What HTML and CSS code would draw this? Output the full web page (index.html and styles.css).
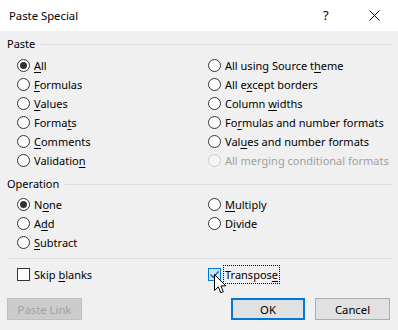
FILE: index.html
```html
<!DOCTYPE html>
<html lang="en">
<head>
    <meta charset="UTF-8">
    <meta name="viewport" content="width=device-width, initial-scale=1.0">
    <title>Paste Special</title>
    <link rel="stylesheet" href="styles.css">
</head>
<body>

<div class="dialog">
    <div class="titlebar">
        <span class="title">Paste Special</span>
        <span class="help">?</span>
        <span class="close">
            <svg width="11" height="11" viewBox="0 0 11 11"><path d="M0.5 0.5 L10.5 10.5 M10.5 0.5 L0.5 10.5" stroke="#000" stroke-width="1" fill="none"/></svg>
        </span>
    </div>

    <div class="content">
        <div class="group-label"><span>Paste</span></div>
        <div class="options paste-options">
            <label class="opt"><span class="radio checked"></span><span><u>A</u>ll</span></label>
            <label class="opt"><span class="radio"></span><span><u>F</u>ormulas</span></label>
            <label class="opt"><span class="radio"></span><span><u>V</u>alues</span></label>
            <label class="opt"><span class="radio"></span><span>Forma<u>t</u>s</span></label>
            <label class="opt"><span class="radio"></span><span><u>C</u>omments</span></label>
            <label class="opt"><span class="radio"></span><span>Validatio<u>n</u></span></label>
            <label class="opt"><span class="radio"></span><span>All using Source t<u>h</u>eme</span></label>
            <label class="opt"><span class="radio"></span><span>All e<u>x</u>cept borders</span></label>
            <label class="opt"><span class="radio"></span><span>Column <u>w</u>idths</span></label>
            <label class="opt"><span class="radio"></span><span>Fo<u>r</u>mulas and number formats</span></label>
            <label class="opt"><span class="radio"></span><span>Val<u>u</u>es and number formats</span></label>
            <label class="opt disabled"><span class="radio"></span><span>All merging conditional formats</span></label>
        </div>

        <div class="group-label op-label"><span>Operation</span></div>
        <div class="options op-options">
            <label class="opt"><span class="radio checked"></span><span>N<u>o</u>ne</span></label>
            <label class="opt"><span class="radio"></span><span>A<u>d</u>d</span></label>
            <label class="opt"><span class="radio"></span><span><u>S</u>ubtract</span></label>
            <label class="opt"><span class="radio"></span><span><u>M</u>ultiply</span></label>
            <label class="opt"><span class="radio"></span><span>D<u>i</u>vide</span></label>
        </div>

        <div class="separator"></div>

        <div class="options check-options">
            <label class="opt"><span class="checkbox"></span><span>Skip <u>b</u>lanks</span></label>
            <label class="opt transpose">
                <span class="checkbox checked">
                    <svg width="11" height="11" viewBox="0 0 11 11"><path d="M1.5 5.5 L4.2 8.2 L9.5 2.5" stroke="#1e5f9e" stroke-width="1.3" fill="none"/></svg>
                </span>
                <span class="focused">Transpos<u>e</u></span>
                <svg class="cursor" width="13" height="20" viewBox="0 0 13 20"><path d="M0.5 0.5 L0.5 16.5 L4.3 12.8 L6.8 18.8 L9.3 17.7 L6.9 11.9 L11.8 11.9 Z" fill="#fff" stroke="#000" stroke-width="1" stroke-linejoin="miter"/></svg>
            </label>
        </div>

        <div class="buttons">
            <button class="btn disabled" disabled>Paste Link</button>
            <button class="btn default">OK</button>
            <button class="btn">Cancel</button>
        </div>
    </div>
</div>

</body>
</html>
```

FILE: styles.css
```css
/* Dialogo Paste Special */
body {
    margin: 0;
    font-family: "Noto Sans", "Open Sans", sans-serif;
    font-size: 11px;
    color: #000;
    background-color: #f0f0f0;
}
.dialog {
    width: 398px;
    height: 330px;
    overflow: hidden;
}
.titlebar {
    height: 31px;
    background-color: #fff;
    display: flex;
    align-items: center;
}
.title {
    margin-left: 9px;
    margin-top: -1px;
    font-size: 11.3px;
    flex: 1;
}
.help {
    width: 10px;
    margin-right: 36px;
    font-size: 13px;
    margin-top: -1px;
}
.close {
    width: 11px;
    height: 11px;
    margin-right: 18px;
    display: flex;
}
.content {
    padding: 5px 6px 0 7px;
}
.group-label {
    display: flex;
    align-items: center;
    height: 16px;
    line-height: 16px;
}
.group-label::after {
    content: "";
    flex: 1;
    height: 1px;
    background-color: #dcdcdc;
    margin-left: 6px;
}
.op-label {
    margin-top: 6px;
}
.options {
    display: grid;
    grid-template-columns: 191px 1fr;
    grid-auto-flow: column;
    padding-left: 10px;
}
.paste-options {
    margin-top: 4px;
    grid-template-rows: repeat(6, 19px);
}
.op-options {
    margin-top: 3px;
    grid-template-rows: repeat(3, 19px);
}
.opt {
    display: flex;
    align-items: center;
    gap: 4px;
    height: 19px;
    white-space: nowrap;
}
.opt u {
    text-underline-offset: 2px;
}
.radio {
    width: 13px;
    height: 13px;
    box-sizing: border-box;
    border: 1px solid #333;
    border-radius: 50%;
    background-color: #fff;
    display: flex;
    align-items: center;
    justify-content: center;
    flex-shrink: 0;
}
.radio.checked::after {
    content: "";
    width: 7px;
    height: 7px;
    border-radius: 50%;
    background-color: #333;
}
.opt.disabled {
    color: #a0a0a0;
}
.opt.disabled .radio {
    border-color: #cccccc;
    background-color: #f5f5f5;
}
.separator {
    height: 1px;
    background-color: #dcdcdc;
    margin-top: 6px;
}
.check-options {
    margin-top: 6px;
    grid-template-rows: 18px;
}
.check-options .opt {
    height: 18px;
}
.checkbox {
    width: 13px;
    height: 13px;
    box-sizing: border-box;
    border: 1px solid #333;
    background-color: #fff;
    flex-shrink: 0;
    display: flex;
    align-items: center;
    justify-content: center;
}
.checkbox.checked {
    border-color: #0078d7;
    background-color: #cce4f7;
}
.transpose {
    position: relative;
    gap: 3px;
}
.focused {
    outline: 1px dotted #000;
    padding: 0 1px;
    line-height: 17px;
}
.cursor {
    position: absolute;
    left: 6px;
    top: 9px;
}
.buttons {
    display: flex;
    margin-top: 15px;
}
.btn {
    font-family: inherit;
    font-size: 11.3px;
    width: 75px;
    height: 22px;
    padding: 0;
    background-color: #e1e1e1;
    border: 1px solid #adadad;
    color: #000;
}
.btn.disabled {
    background-color: #cccccc;
    border-color: #bfbfbf;
    color: #a0a0a0;
}
.btn + .btn {
    margin-left: 10px;
}
.btn.default {
    margin-left: auto;
    width: 74px;
    border: 2px solid #0078d7;
}
.buttons .btn:last-child {
    margin-right: 2px;
}
```
